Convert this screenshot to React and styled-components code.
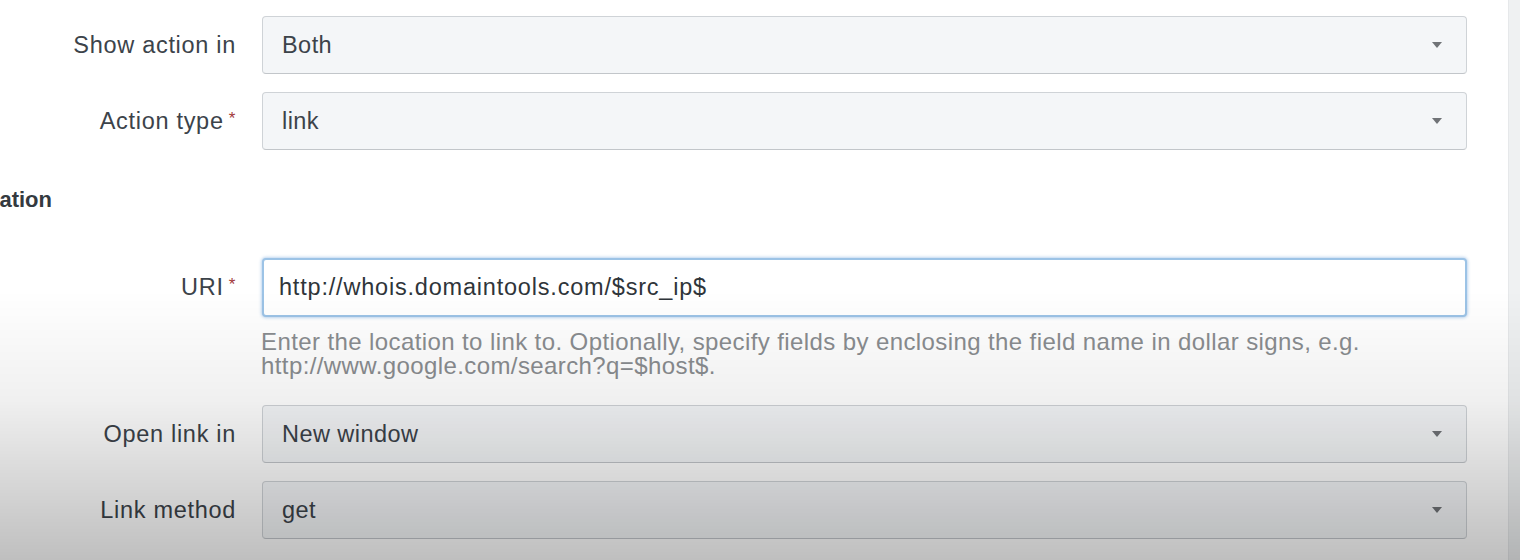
import React from "react";
import styled, { createGlobalStyle } from "styled-components";

const Global = createGlobalStyle`
  html, body { margin: 0; padding: 0; background: #ffffff; }
  body { font-family: "Liberation Sans", Arial, sans-serif; overflow: hidden; }
`;

const Page = styled.div`
  display: flex;
  width: 1520px;
  height: 560px;
  background: #ffffff;
  overflow: hidden;
`;

const Main = styled.div`
  flex: 1;
  display: flex;
  flex-direction: column;
  padding: 16px 41px 0 0;
`;

const Scrollbar = styled.div`
  width: 11px;
  border-left: 1px solid #e6e8ea;
  background: #eff1f2;
`;

const Vignette = styled.div`
  position: fixed;
  inset: 0;
  pointer-events: none;
  background: linear-gradient(
    to bottom,
    rgba(0, 0, 0, 0) 0px,
    rgba(0, 0, 0, 0) 290px,
    rgba(0, 0, 0, 0.06) 400px,
    rgba(0, 0, 0, 0.25) 560px
  );
`;

const Row = styled.div`
  display: grid;
  grid-template-columns: 236px 1fr;
  column-gap: 26px;
  align-items: center;
  margin-top: ${(p) => p.$mt || 0}px;
`;

const Label = styled.label`
  justify-self: end;
  font-size: 23.5px;
  letter-spacing: 0.7px;
  color: #3c434a;
  white-space: nowrap;
`;

const Req = styled.span`
  color: #a2393a;
  font-size: 17px;
  margin-left: 5px;
  vertical-align: 5px;
`;

const Select = styled.div`
  box-sizing: border-box;
  height: 58px;
  display: flex;
  align-items: center;
  justify-content: space-between;
  padding: 0 24px 0 19px;
  background: #f4f6f8;
  border: 1px solid #cfd3d7;
  border-bottom-color: #c2c6ca;
  border-radius: 4px;
  font-size: 23.5px;
  letter-spacing: 0.45px;
  color: #3c434a;
`;

const Caret = styled.svg`
  width: 10px;
  height: 6px;
  flex: none;
`;

const Input = styled.div`
  box-sizing: border-box;
  height: 59px;
  display: flex;
  align-items: center;
  padding: 0 15px;
  background: #ffffff;
  border: 2px solid #9cc3e6;
  border-radius: 4px;
  box-shadow: 0 0 3px 1px rgba(110, 165, 220, 0.45);
  font-size: 23.5px;
  letter-spacing: 0.8px;
  color: #2f353a;
`;

const Heading = styled.div`
  margin-top: 38px;
  width: 52px;
  display: flex;
  justify-content: flex-end;
  overflow: hidden;
  white-space: nowrap;
  font-size: 22px;
  font-weight: 700;
  color: #343a40;
  line-height: 24px;
`;

const Help = styled.div`
  grid-column: 2;
  margin-top: 13px;
  margin-left: -1px;
  font-size: 24px;
  line-height: 24px;
  letter-spacing: 0.4px;
  color: #8a8d90;
`;

function SelectBox({ value }) {
  return (
    <Select>
      <span>{value}</span>
      <Caret viewBox="0 0 10 6">
        <path d="M0 0 H10 L5 6 Z" fill="#707377" />
      </Caret>
    </Select>
  );
}

export default function App() {
  return (
    <>
      <Global />
      <Page>
        <Main>
          <Row>
            <Label>Show action in</Label>
            <SelectBox value="Both" />
          </Row>
          <Row $mt={18}>
            <Label>
              Action type<Req>*</Req>
            </Label>
            <SelectBox value="link" />
          </Row>
          <Heading>
            <span>Link Configuration</span>
          </Heading>
          <Row $mt={46}>
            <Label>
              URI<Req>*</Req>
            </Label>
            <Input>http://whois.domaintools.com/$src_ip$</Input>
            <Help>
              Enter the location to link to. Optionally, specify fields by enclosing the field name in dollar signs, e.g.
              <br />
              http://www.google.com/search?q=$host$.
            </Help>
          </Row>
          <Row $mt={27}>
            <Label>Open link in</Label>
            <SelectBox value="New window" />
          </Row>
          <Row $mt={18}>
            <Label>Link method</Label>
            <SelectBox value="get" />
          </Row>
        </Main>
        <Scrollbar />
        <Vignette />
      </Page>
    </>
  );
}
